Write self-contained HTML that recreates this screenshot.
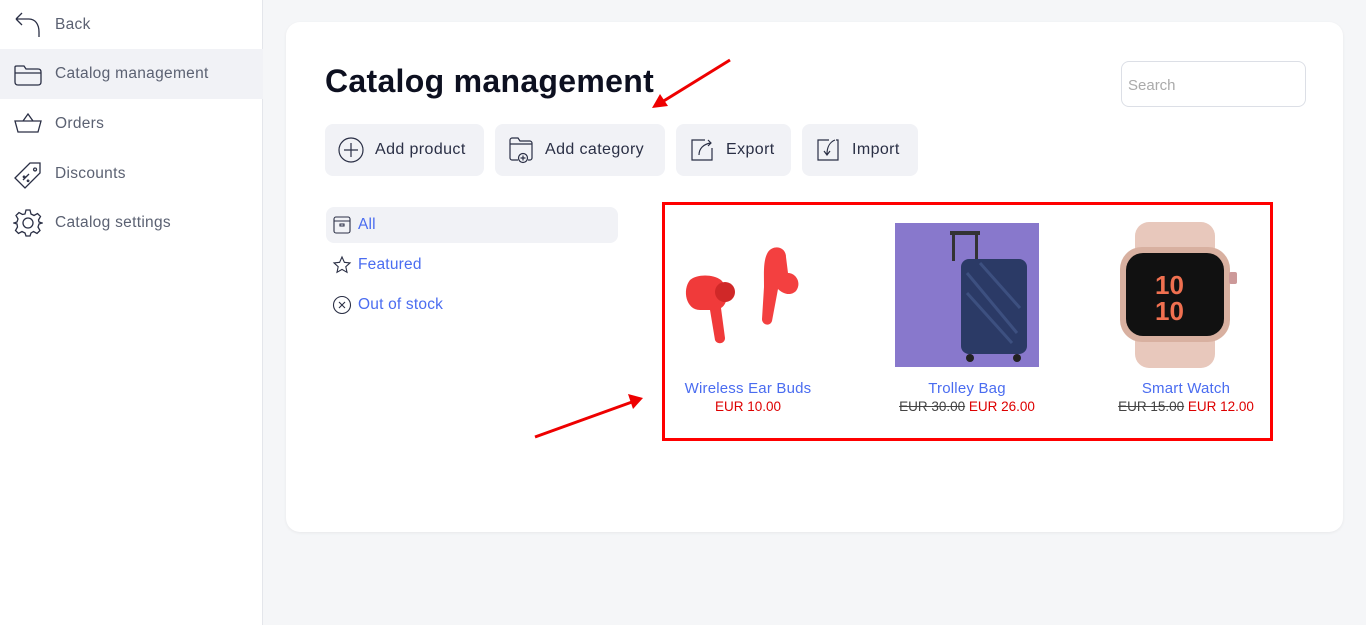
<!DOCTYPE html>
<html><head><style>
*{margin:0;padding:0;box-sizing:border-box}
body{width:1366px;height:625px;background:#f5f6f8;font-family:"Liberation Sans",sans-serif;position:relative;overflow:hidden;color:#2a2f45}
.side{position:absolute;left:0;top:0;width:263px;height:625px;background:#fff;border-right:1px solid #e4e6eb}
.nav{position:absolute;left:0;width:263px;height:50px;display:flex;align-items:center;font-size:15.5px;letter-spacing:.3px;color:#5b6172}
.nav svg{position:absolute;left:13px}
.nav span{position:absolute;left:55px}
.card{position:absolute;left:286px;top:22px;width:1057px;height:510px;background:#fff;border-radius:14px;box-shadow:0 1px 3px rgba(0,0,0,.06)}
h1{position:absolute;left:325px;top:63px;font-size:32px;font-weight:bold;color:#0d1020;letter-spacing:.3px}
.search{position:absolute;left:1121px;top:61px;width:185px;height:46px;border:1px solid #dcdfe6;border-radius:8px;font-size:15px;color:#aaa;padding:15px 6px}
.btn{position:absolute;top:124px;height:52px;background:#f1f2f6;border-radius:8px;font-size:16px;letter-spacing:.4px;color:#2a2f45;display:flex;align-items:center}
.btn svg{position:absolute;left:13px}
.btn span{position:absolute;left:50px}
.f{position:absolute;left:326px;font-size:15.5px;letter-spacing:.2px;color:#4a6cf0;height:36px;width:292px;display:flex;align-items:center;border-radius:8px}
.f svg{position:absolute;left:6px}
.f span{position:absolute;left:32px}
.red{position:absolute;left:662px;top:202px;width:611px;height:239px;border:3px solid #f00}
.name{position:absolute;font-size:15px;letter-spacing:.2px;color:#4a6cf0;text-align:center;width:200px}
.price{position:absolute;font-size:13.5px;color:#d00;text-align:center;width:200px}
.price s{color:#444}
</style></head><body>
<div class="side">
<div class="nav" style="top:0"><svg width="30" height="30" viewBox="0 0 30 30" fill="none" stroke="#2a2f45" stroke-width="1.3"><path d="M3 9h13c6 0 10 5 10 13v5M3 9l6-6M3 9l6 6"/></svg><span>Back</span></div>
<div class="nav" style="top:49px;background:#f1f2f6"><svg width="30" height="30" viewBox="0 0 30 30" fill="none" stroke="#2a2f45" stroke-width="1.3"><path d="M2 8v15c0 2 1 3 3 3h20c2 0 3-1 3-3V13c0-2-1-3-3-3H13l-2-3H4c-1 0-2 0-2 1zM2 14h26"/></svg><span>Catalog management</span></div>
<div class="nav" style="top:99px"><svg width="30" height="30" viewBox="0 0 30 30" fill="none" stroke="#2a2f45" stroke-width="1.3"><path d="M2 12h26l-3 11H5zM10 12l5-7 5 7"/></svg><span>Orders</span></div>
<div class="nav" style="top:149px"><svg width="30" height="30" viewBox="0 0 30 30" fill="none" stroke="#2a2f45" stroke-width="1.3"><path d="M2 19L17 4h10v10L12 29zM22 9a1.5 1.5 0 1 0 .1 0M10 21l6-6M11 17a.8.8 0 1 0 .1 0M15 21a.8.8 0 1 0 .1 0"/></svg><span>Discounts</span></div>
<div class="nav" style="top:198px"><svg width="30" height="30" viewBox="0 0 30 30" fill="none" stroke="#2a2f45" stroke-width="1.3"><circle cx="15" cy="15" r="5"/><path d="M13 2h4l1 4 3 1.5 3.5-2 3 3-2 3.5L26 14l3 1v0l-3 1-1 3 2 3.5-3 3-3.5-2L18 25l-1 3h-4l-1-3-3-1.5-3.5 2-3-3 2-3.5L4 16l-3-1 3-1 1-3-2-3.5 3-3 3.5 2L12 6z"/></svg><span>Catalog settings</span></div>
</div>
<div class="card"></div>
<h1>Catalog management</h1>
<div class="search">Search</div>
<div class="btn" style="left:325px;width:159px"><svg width="26" height="26" viewBox="0 0 26 26" fill="none" stroke="#2a2f45" stroke-width="1.2"><circle cx="13" cy="13" r="12"/><path d="M13 6v14M6 13h14"/></svg><span>Add product</span></div>
<div class="btn" style="left:495px;width:170px"><svg width="28" height="28" viewBox="0 0 28 28" fill="none" stroke="#2a2f45" stroke-width="1.2"><path d="M10 24H4c-1 0-2-1-2-2V4c0-1 1-2 2-2h6l2 3h10c1 0 2 1 2 2v15c0 1-1 2-2 2h-2M2 8h22"/><circle cx="15" cy="22" r="4.5"/><path d="M15 19.5v5M12.5 22h5"/></svg><span>Add category</span></div>
<div class="btn" style="left:676px;width:115px"><svg width="26" height="26" viewBox="0 0 26 26" fill="none" stroke="#2a2f45" stroke-width="1.2"><path d="M16 3H3v20h20V11M10 18c0-6 4-11 12-12M19 3l3 3-3 3"/></svg><span>Export</span></div>
<div class="btn" style="left:802px;width:116px"><svg width="26" height="26" viewBox="0 0 26 26" fill="none" stroke="#2a2f45" stroke-width="1.2"><path d="M14 3H3v20h20V3h-2M20 3c-5 2-8 7-8 14M9 14l3 4 3-4"/></svg><span>Import</span></div>
<div class="f" style="top:207px;background:#f1f2f6"><svg width="20" height="20" viewBox="0 0 20 20" fill="none" stroke="#2a2f45" stroke-width="1.1"><rect x="2" y="2" width="16" height="16" rx="2"/><path d="M2 6h16M8 9h4v2H8z"/></svg><span>All</span></div>
<div class="f" style="top:247px"><svg width="20" height="20" viewBox="0 0 20 20" fill="none" stroke="#2a2f45" stroke-width="1.1"><path d="M10 2l2.4 5.3 5.6.6-4.2 3.8 1.2 5.6L10 14.4 5 17.3l1.2-5.6L2 7.9l5.6-.6z"/></svg><span>Featured</span></div>
<div class="f" style="top:287px"><svg width="20" height="20" viewBox="0 0 20 20" fill="none" stroke="#2a2f45" stroke-width="1.1"><circle cx="10" cy="10" r="8.5"/><path d="M7 7l6 6M13 7l-6 6"/></svg><span>Out of stock</span></div>
<div class="red"></div>
<svg style="position:absolute;left:680px;top:240px" width="140" height="110" viewBox="0 0 140 110"><path d="M10 40c-8 10-4 30 10 30l10 0 5 30c2 5 10 4 10-2l-4-30c8-5 8-20 0-28-8-6-24-6-31 0z" fill="#f03a3a"/><circle cx="45" cy="52" r="10" fill="#d02828"/><path d="M88 12c6-8 18-5 18 5l2 16c8 0 14 10 8 18-6 6-14 2-18-2l-6 32c-2 6-10 4-10-2l2-32c0-14-1-27 4-35z" fill="#f34040"/></svg>
<div style="position:absolute;left:895px;top:223px;width:144px;height:144px;background:#8878cc"></div>
<svg style="position:absolute;left:895px;top:223px" width="144" height="144" viewBox="0 0 144 144"><rect x="55" y="8" width="30" height="4" fill="#333"/><rect x="57" y="8" width="3" height="30" fill="#333"/><rect x="80" y="8" width="3" height="30" fill="#333"/><rect x="66" y="36" width="66" height="95" rx="8" fill="#2b3a66"/><path d="M72 50l50 60M72 70l45 50M85 40l40 45" stroke="#3d5080" stroke-width="3"/><circle cx="75" cy="135" r="4" fill="#222"/><circle cx="122" cy="135" r="4" fill="#222"/></svg>
<svg style="position:absolute;left:1115px;top:222px" width="135" height="146" viewBox="0 0 135 146"><rect x="20" y="0" width="80" height="146" rx="14" fill="#e8c8bc"/><rect x="5" y="25" width="110" height="95" rx="22" fill="#d8b0a0"/><rect x="11" y="31" width="98" height="83" rx="17" fill="#111"/><text x="40" y="72" font-size="26" fill="#f07050" font-family="Liberation Sans" font-weight="bold">10</text><text x="40" y="98" font-size="26" fill="#f07050" font-family="Liberation Sans" font-weight="bold">10</text><rect x="114" y="50" width="8" height="12" rx="2" fill="#c99"/></svg>
<div class="name" style="left:648px;top:380px">Wireless Ear Buds</div>
<div class="price" style="left:648px;top:399px">EUR 10.00</div>
<div class="name" style="left:867px;top:380px">Trolley Bag</div>
<div class="price" style="left:867px;top:399px"><s>EUR 30.00</s> EUR 26.00</div>
<div class="name" style="left:1086px;top:380px">Smart Watch</div>
<div class="price" style="left:1086px;top:399px"><s>EUR 15.00</s> EUR 12.00</div>
<svg style="position:absolute;left:0;top:0" width="1366" height="625"><g stroke="#e00" stroke-width="3" fill="#e00"><line x1="730" y1="60" x2="662" y2="102"/><polygon points="652,108 660,94 668,106" stroke="none"/><line x1="535" y1="437" x2="632" y2="402"/><polygon points="643,398 628,394 633,409" stroke="none"/></g></svg>
</body></html>
